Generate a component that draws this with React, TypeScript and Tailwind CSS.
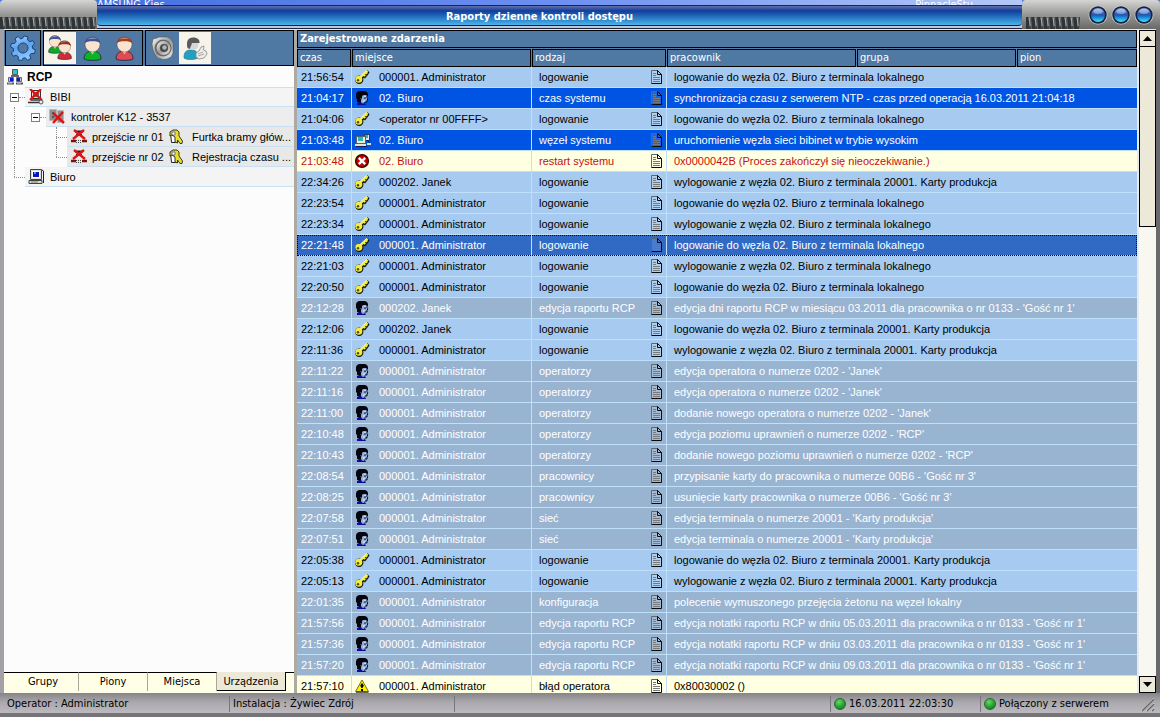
import { useState } from "react";
import type { ReactNode } from "react";

type IconKind = "key" | "face" | "net" | "error" | "warn";
type Tone = "light" | "blue" | "cream" | "muted" | "selected" | "warning";
type LogRow = [string, IconKind, string, string, string, Tone];

const ADMIN = "000001. Administrator";
const JANEK = "000202. Janek";

const rows: LogRow[] = [
  ["21:56:54", "key", ADMIN, "logowanie", "logowanie do węzła 02. Biuro z terminala lokalnego", "light"],
  ["21:04:17", "face", "02. Biuro", "czas systemu", "synchronizacja czasu z serwerem NTP - czas przed operacją 16.03.2011 21:04:18", "blue"],
  ["21:04:06", "key", "<operator nr 00FFFF>", "logowanie", "logowanie do węzła 02. Biuro z terminala lokalnego", "light"],
  ["21:03:48", "net", "02. Biuro", "węzeł systemu", "uruchomienie węzła sieci bibinet w trybie wysokim", "blue"],
  ["21:03:48", "error", "02. Biuro", "restart systemu", "0x0000042B (Proces zakończył się nieoczekiwanie.)", "cream"],
  ["22:34:26", "key", JANEK, "logowanie", "wylogowanie z węzła 02. Biuro z terminala 20001. Karty produkcja", "light"],
  ["22:23:54", "key", ADMIN, "logowanie", "logowanie do węzła 02. Biuro z terminala lokalnego", "light"],
  ["22:23:34", "key", ADMIN, "logowanie", "wylogowanie z węzła 02. Biuro z terminala lokalnego", "light"],
  ["22:21:48", "key", ADMIN, "logowanie", "logowanie do węzła 02. Biuro z terminala lokalnego", "selected"],
  ["22:21:03", "key", ADMIN, "logowanie", "wylogowanie z węzła 02. Biuro z terminala lokalnego", "light"],
  ["22:20:50", "key", ADMIN, "logowanie", "logowanie do węzła 02. Biuro z terminala lokalnego", "light"],
  ["22:12:28", "face", JANEK, "edycja raportu RCP", "edycja dni raportu RCP w miesiącu 03.2011 dla pracownika o nr 0133 - 'Gość nr 1'", "muted"],
  ["22:12:06", "key", JANEK, "logowanie", "logowanie do węzła 02. Biuro z terminala 20001. Karty produkcja", "light"],
  ["22:11:36", "key", ADMIN, "logowanie", "wylogowanie z węzła 02. Biuro z terminala 20001. Karty produkcja", "light"],
  ["22:11:22", "face", ADMIN, "operatorzy", "edycja operatora o numerze 0202 - 'Janek'", "muted"],
  ["22:11:16", "face", ADMIN, "operatorzy", "edycja operatora o numerze 0202 - 'Janek'", "muted"],
  ["22:11:00", "face", ADMIN, "operatorzy", "dodanie nowego operatora o numerze 0202 - 'Janek'", "muted"],
  ["22:10:48", "face", ADMIN, "operatorzy", "edycja poziomu uprawnień o numerze 0202 - 'RCP'", "muted"],
  ["22:10:43", "face", ADMIN, "operatorzy", "dodanie nowego poziomu uprawnień o numerze 0202 - 'RCP'", "muted"],
  ["22:08:54", "face", ADMIN, "pracownicy", "przypisanie karty do pracownika o numerze 00B6 - 'Gość nr 3'", "muted"],
  ["22:08:25", "face", ADMIN, "pracownicy", "usunięcie karty pracownika o numerze 00B6 - 'Gość nr 3'", "muted"],
  ["22:07:58", "face", ADMIN, "sieć", "edycja terminala o numerze 20001 - 'Karty produkcja'", "muted"],
  ["22:07:51", "face", ADMIN, "sieć", "edycja terminala o numerze 20001 - 'Karty produkcja'", "muted"],
  ["22:05:38", "key", ADMIN, "logowanie", "logowanie do węzła 02. Biuro z terminala 20001. Karty produkcja", "light"],
  ["22:05:13", "key", ADMIN, "logowanie", "wylogowanie z węzła 02. Biuro z terminala 20001. Karty produkcja", "light"],
  ["22:01:35", "face", ADMIN, "konfiguracja", "polecenie wymuszonego przejęcia żetonu na węzeł lokalny", "muted"],
  ["21:57:56", "face", ADMIN, "edycja raportu RCP", "edycja notatki raportu RCP w dniu 05.03.2011 dla pracownika o nr 0133 - 'Gość nr 1'", "muted"],
  ["21:57:36", "face", ADMIN, "edycja raportu RCP", "edycja notatki raportu RCP w dniu 03.03.2011 dla pracownika o nr 0133 - 'Gość nr 1'", "muted"],
  ["21:57:20", "face", ADMIN, "edycja raportu RCP", "edycja notatki raportu RCP w dniu 09.03.2011 dla pracownika o nr 0133 - 'Gość nr 1'", "muted"],
  ["21:57:10", "warn", ADMIN, "błąd operatora", "0x80030002 ()", "warning"],
];

const toneClass: Record<Tone, string> = {
  light: "bg-[#a6caf0] text-black",
  blue: "bg-[#0054e3] text-white",
  cream: "bg-[#ffffe1] text-[#c80f0f]",
  muted: "bg-[#99b4d1] text-white",
  selected: "bg-[#316ac5] text-white outline-1 -outline-offset-1 outline-dotted outline-black",
  warning: "bg-[#ffffe1] text-black",
};

function RowIcon({ kind }: { kind: IconKind }) {
  if (kind === "key")
    return (
      <svg width="16" height="16" viewBox="0 0 16 16">
        <path d="M6 10L14.500 2.200M10.500 7l1.500 1.200M13 4.600l1.200.8" stroke="#15150a" strokeWidth="3.200" fill="none" />
        <circle cx="5.200" cy="10.800" r="4.200" fill="#15150a" />
        <path d="M5.500 9.300L13.600 1.700M10 6l1.300 1M12.400 3.800l1 .7" stroke="#f2ec3a" strokeWidth="2.200" fill="none" />
        <circle cx="4.800" cy="10.300" r="3.500" fill="#f2ec3a" />
        <path d="M6 7.600L12.700 1.300" stroke="#fffcc4" strokeWidth=".9" />
        <circle cx="4" cy="11.200" r="1.200" fill="#4a4920" />
      </svg>
    );
  if (kind === "face")
    return (
      <svg width="16" height="16" viewBox="0 0 16 16">
        <path d="M5 1h6l2 1 1 2v2h-2l-2-1-2 1v2l1 1v4H5l-1-1H3V9L2 8V4l1-2z" fill="#050510" />
        <path d="M8 6l2-1h3v2l1 2-1 .5V12h-3l-1 1.500-2-1V10l1-1z" fill="#8fb0d8" />
        <path d="M13 5v2.500l1 1.500-1 1v2h-2.500" stroke="#050530" fill="none" />
        <path d="M10 7h2M7 8.500l1 1M9 11h2" stroke="#fff" fill="none" />
        <path d="M10 8h2" stroke="#050510" />
        <path d="M3 13l3-1 3 2 2-1 1 2H3z" fill="#0a0aa0" />
      </svg>
    );
  if (kind === "net")
    return (
      <svg width="18" height="16" viewBox="0 0 18 16" shapeRendering="crispEdges">
        <path d="M10 2h5v6h-5z" fill="#dce8ed" stroke="#23445c" />
        <path d="M11 3h3v3h-3z" fill="#3aa4d8" />
        <path d="M2 4h9v7H2z" fill="#ececdc" stroke="#52636b" />
        <path d="M4 5h5v4H4z" fill="#2fb5ad" />
        <path d="M1 12h11v2H1zM13 11h4v2h-4z" fill="#e3e1cf" />
        <path d="M2 14.500h11M13 8l3 3" stroke="#091b56" />
      </svg>
    );
  if (kind === "error")
    return (
      <svg width="16" height="16" viewBox="0 0 16 16">
        <circle cx="8" cy="8" r="6.400" fill="#c30000" stroke="#3c0000" strokeWidth="1.400" />
        <path d="M4.800 4.800l6.400 6.400M11.200 4.800l-6.400 6.400" stroke="#fff" strokeWidth="2.400" />
      </svg>
    );
  return (
    <svg width="16" height="16" viewBox="0 0 16 16">
      <path d="M8 2L14.500 13.500h-13z" fill="#ffed00" stroke="#777400" strokeLinejoin="round" />
      <path d="M2 14.200h12.500" stroke="#222" />
      <path d="M8 5l1.800 2.500L8.500 10h-1L6.200 7.500zM7 11h2v2H7z" fill="#000" />
    </svg>
  );
}

function DocIcon() {
  return (
    <svg width="11" height="14" viewBox="0 0 11 14" className="shrink-0">
      <path d="M.5.5h6l4 4v9H.5z" fill="#fff" fillOpacity=".1" />
      <path d="M.5 13.500V.5h6.500" stroke="#5f676e" fill="none" />
      <path d="M6.500.5v4h4v9H.5M6.500.5l4 4" stroke="#0b0b0b" fill="none" />
      <path d="M2 3.500h3M2 5.500h3M2 7.500h7M2 9.500h7M2 11.500h7" stroke="#77797a" />
    </svg>
  );
}

function Person({ body, hair, x = 0, y = 0, s = 1 }: { body: string; hair: string; x?: number; y?: number; s?: number }) {
  return (
    <g transform={`translate(${x} ${y}) scale(${s})`}>
      <path d="M3.500 23c0-5 2.500-6.500 5.500-7.500h6c3 1 5.500 2.500 5.500 7.500-3 1.800-14 1.800-17 0z" fill={body} stroke="#223" strokeWidth=".8" />
      <path d="M9 14h6l-3 4.500z" fill="#f0c7a8" />
      <circle cx="12" cy="8.500" r="7.500" fill="#fbe4cf" stroke="#6b5048" strokeWidth=".5" />
      <path d="M4 7.500C4.500 3 8 .8 12 .8S19.500 3 20 7.500c-2-2-4-2.300-8-2.300s-6 .3-8 2.300z" fill={hair} />
      <path d="M7 3.600c3-2.300 7-2.300 10-.8-4-.6-7-.4-10 .8z" fill="#fff" opacity=".6" />
    </g>
  );
}

function GearIcon() {
  return (
    <svg width="26" height="26" viewBox="0 0 26 26">
      <defs>
        <linearGradient id="gear" x2=".6" y2="1">
          <stop stopColor="#b6dcff" />
          <stop offset=".5" stopColor="#5ea3ee" />
          <stop offset="1" stopColor="#91cbff" />
        </linearGradient>
      </defs>
      <g transform="rotate(14 13 13)" fill="url(#gear)" stroke="#123e83" strokeWidth=".9">
        <path
          fillRule="evenodd"
          d="M11 1h4l.6 3.200 2.400 1L20.700 3.400l2.600 2.700-1.800 2.700.9 2.300L25.500 12v3.600l-3.200.6-1 2.300 1.800 2.700-2.700 2.600-2.700-1.800-2.300.9L14.800 25.500h-3.600l-.6-2.900-2.500-1-2.600 1.800-2.600-2.700 1.800-2.600-1-2.300L.7 15v-3.700l3-.6 1-2.400L3 5.600 5.600 3l2.700 1.800 2-1zM13 8a5 5 0 1 0 .01 0z"
        />
      </g>
    </svg>
  );
}

function SpeakerIcon() {
  return (
    <svg width="24" height="24" viewBox="0 0 24 24">
      <defs>
        <linearGradient id="metal" x2="1" y2="1">
          <stop stopColor="#fafafa" />
          <stop offset=".5" stopColor="#9b9b9b" />
          <stop offset="1" stopColor="#f5f5f5" />
        </linearGradient>
      </defs>
      <path d="M2 3l4-1 2-1h8l4 2 2 4v10l-2 4-4 2-4 .5-5-1.500-3-3-2-5-1-6z" fill="url(#metal)" stroke="#555" strokeWidth=".6" />
      <circle cx="12" cy="12" r="8.500" fill="#777" />
      <circle cx="12.500" cy="12" r="7.500" fill="url(#metal)" stroke="#444" strokeWidth=".7" />
      <circle cx="13" cy="12" r="4" fill="#4a4a4a" />
      <circle cx="13.500" cy="11.500" r="2.200" fill="#b5b5b5" />
    </svg>
  );
}

function OperatorIcon() {
  return (
    <svg width="25" height="25" viewBox="0 0 25 25">
      <path d="M1 22c0-6 2-8 7-8 6 0 7 3 7 8-4 2-11 2-14 0z" fill="#239fc2" stroke="#277086" strokeWidth=".6" />
      <circle cx="10" cy="8.500" r="5.500" fill="#d6d6d6" />
      <path d="M4.500 12C3 5 5 1.500 10 1.500s7 2.500 6.500 5.500H9l-1 3-1.500 3z" fill="#5a5a5a" />
      <path d="M13 17l3-2 2-4 3-1-.5 4L23 15l1 3-3 4-5 1-3-2z" fill="#ececec" stroke="#888" strokeWidth=".8" />
      <path d="M15 18l5-2M15 20l6-2" stroke="#aaa" />
    </svg>
  );
}

type TreeKind = "root" | "brokenPc" | "brokenBox" | "door" | "pc" | "tag";

function TreeIcon({ kind }: { kind: TreeKind }) {
  return (
    <svg width="16" height="16" viewBox="0 0 16 16" className="shrink-0">
      {kind === "root" && (
        <>
          <path d="M5.500.5h5v5h-5z" fill="#31c5c1" stroke="#555" />
          <path d="M4 7h8" stroke="#333" strokeWidth="1.500" />
          <path d="M1.500 8.500h5v4h-5zM9.500 8.500h5v4h-5z" fill="#ccc" stroke="#666" />
          <path d="M3 9h3v3H3zM10 9h3v3h-3z" fill="#0616d9" />
          <path d="M0 14.500h7M9 14.500h7" stroke="#555" strokeWidth="2" />
          <path d="M1 14h4M10 14h4" stroke="#ccc" />
        </>
      )}
      {kind === "pc" && (
        <>
          <path d="M2.500.5h11v10h-11z" fill="#e2dfd2" stroke="#454545" />
          <path d="M4 2h8v7H4z" fill="#fff" />
          <path d="M5 3h6v5H5z" fill="#0616b9" />
          <path d="M6 3h2v2H6z" fill="#4a8cff" />
          <path d="M1 11.500h13v3H1z" fill="#ddd9cb" stroke="#444" />
          <path d="M14 1l1.500 1v12" stroke="#222" fill="none" />
          <path d="M3 13h7" stroke="#777" />
        </>
      )}
      {kind === "brokenPc" && (
        <>
          <path d="M3.500 1.500h9v8h-9z" fill="#ddd" stroke="#333" />
          <path d="M5 3h6v5H5z" fill="#6c6464" />
          <path d="M0 13.500h11M3 11h9" stroke="#333" strokeWidth="1.500" />
          <circle cx="13" cy="13" r="2" fill="#eee" stroke="#555" />
          <path d="M2 0l12 11M13 0L2 11" stroke="#e01212" strokeWidth="2.200" />
        </>
      )}
      {kind === "brokenBox" && (
        <>
          <path d="M.5.5h7v11h-7zM8.500 1.500h6v12h-6z" fill="#8f8f8f" stroke="#bbb" />
          <path d="M3 3h2v2H3zM3 7h2v2H3z" fill="#555" />
          <path d="M4 4l11 10M14 3L4 14" stroke="#e01212" strokeWidth="2.400" />
        </>
      )}
      {kind === "door" && (
        <>
          <path d="M4 2.500h8M5 6h6M6 4h4" stroke="#222" strokeWidth="2" />
          <path d="M3 1l11 9M13 1L2 10" stroke="#df1515" strokeWidth="2.400" />
          <path d="M0 12h5M11 12h5" stroke="#7b1111" strokeWidth="2.400" />
          <path d="M5 11.500h6M5 13.500h6" stroke="#444" strokeDasharray="1 1" />
        </>
      )}
      {kind === "tag" && (
        <>
          <path d="M2.500 3.500h5v10h-4z" fill="#fff" stroke="#222" />
          <path d="M2 7V3L5 1h4l2 2v4l3.500 5-.5 2.500h-2L9.500 11v3L7 13V8L4 6z" fill="#e5df28" stroke="#222" strokeWidth=".9" />
          <path d="M4 3h3v3H4z" fill="#fff" stroke="#333" strokeWidth=".6" />
        </>
      )}
    </svg>
  );
}

function Toggle() {
  return (
    <button type="button" aria-label="Zwiń" className="flex size-[9px] shrink-0 items-center justify-center border border-[#808080] bg-white">
      <span className="h-px w-[5px] bg-black" />
    </button>
  );
}

function TreeRow({ children }: { children: ReactNode }) {
  return <div className="flex h-5 items-stretch">{children}</div>;
}

const dottedV = "border-l border-dotted border-[#909090]";
const dottedH = "border-t border-dotted border-[#909090]";

function Elbow({ last = false }: { last?: boolean }) {
  return (
    <div className="flex w-[11px] shrink-0 flex-col">
      <div className={`h-[10px] ${dottedV}`} />
      <div className={`flex-1 ${dottedH} ${last ? "" : dottedV}`} />
    </div>
  );
}

function Passage({ name, note, last }: { name: string; note: string; last?: boolean }) {
  return (
    <TreeRow>
      <div className="w-[10px] shrink-0" />
      <div className={`w-[42px] shrink-0 ${dottedV}`} />
      <Elbow last={last} />
      <div className="flex min-w-0 flex-1 items-center border-b border-[#c9dff2] bg-[#e8e8e8] pl-1">
        <TreeIcon kind="door" />
        <span className="ml-[5px] w-[76px] shrink-0 whitespace-nowrap">{name}</span>
        <TreeIcon kind="tag" />
        <span className="ml-2 whitespace-nowrap">{note}</span>
      </div>
    </TreeRow>
  );
}

const gridFont = "font-['Liberation_Sans',Arial,sans-serif] text-[11px] leading-[14px]";

function Tree() {
  return (
    <div className={`flex-1 overflow-hidden bg-[#fcfcfc] text-black ${gridFont}`}>
      <div className="flex h-[21px] items-center gap-1 pl-[3px] text-[12px] font-bold">
        <TreeIcon kind="root" />
        <span>RCP</span>
      </div>
      <TreeRow>
        <div className="flex w-[21px] shrink-0 items-center pl-[6px]">
          <Toggle />
          <span className={`flex-1 ${dottedH}`} />
        </div>
        <div className="flex flex-1 items-center gap-[6px] border-y border-[#c9dff2] bg-[#f4f4f4] pl-[3px]">
          <TreeIcon kind="brokenPc" />
          <span>BIBI</span>
        </div>
      </TreeRow>
      <TreeRow>
        <div className="w-[10px] shrink-0" />
        <div className={`flex w-[32px] shrink-0 items-center pl-4 ${dottedV}`}>
          <Toggle />
          <span className={`flex-1 ${dottedH}`} />
        </div>
        <div className="flex flex-1 items-center gap-[6px] border-b border-[#c9dff2] bg-[#ededed] pl-[3px]">
          <TreeIcon kind="brokenBox" />
          <span>kontroler K12 - 3537</span>
        </div>
      </TreeRow>
      <Passage name="przejście nr 01" note="Furtka bramy głów..." />
      <Passage name="przejście nr 02" note="Rejestracja czasu ..." last />
      <TreeRow>
        <div className="w-[10px] shrink-0" />
        <Elbow last />
        <div className="flex flex-1 items-center gap-[6px] border-b border-[#c9dff2] bg-[#f4f4f4] pl-[3px]">
          <TreeIcon kind="pc" />
          <span>Biuro</span>
        </div>
      </TreeRow>
    </div>
  );
}

function ToolButton({ label, on = false, children }: { label: string; on?: boolean; children: ReactNode }) {
  return (
    <button type="button" aria-label={label} aria-pressed={on} className={`flex size-8 items-center justify-center ${on ? "bg-[#f6f3ea]" : ""}`}>
      {children}
    </button>
  );
}

function Toolbar() {
  const group = "flex items-center border border-black";
  return (
    <div className="flex h-9 shrink-0 gap-[2px] bg-[#4f78a2] pl-px">
      <div className={`${group} px-px`}>
        <ToolButton label="Ustawienia"><GearIcon /></ToolButton>
      </div>
      <div className={`${group} pr-[2px]`}>
        <ToolButton label="Wszyscy" on>
          <svg width="28" height="28" viewBox="0 0 28 28">
            <Person body="#0daa24" hair="#40548e" x={0} y={1} s={0.75} />
            <Person body="#d12b38" hair="#94301c" x={9} y={6} s={0.8} />
          </svg>
        </ToolButton>
        <ToolButton label="Obecni">
          <svg width="25" height="25" viewBox="0 0 24 25"><Person body="#08b526" hair="#40548e" /></svg>
        </ToolButton>
        <ToolButton label="Nieobecni">
          <svg width="25" height="25" viewBox="0 0 24 25"><Person body="#e04a53" hair="#a23d24" /></svg>
        </ToolButton>
      </div>
      <div className={`${group} flex-1 px-px`}>
        <ToolButton label="Dźwięk"><SpeakerIcon /></ToolButton>
        <ToolButton label="Operator" on><OperatorIcon /></ToolButton>
      </div>
    </div>
  );
}

const tabs = ["Grupy", "Piony", "Miejsca", "Urządzenia"];

function Tabs() {
  const [active, setActive] = useState("Urządzenia");
  return (
    <div className="flex h-[21px] shrink-0 border-t border-black bg-[#ffffe8] text-[11px] leading-4">
      {tabs.map((t, i) => (
        <button
          key={t}
          type="button"
          onClick={() => setActive(t)}
          className={`-mt-px h-[19px] ${i === 0 ? "w-[75px] pl-1" : "w-[69px]"} ${
            t === active ? "border-r border-b border-black bg-[#ece9d8] pt-px" : "border-t border-r border-t-black border-r-[#aaa798]"
          }`}
        >
          {t}
        </button>
      ))}
    </div>
  );
}

function Teeth({ count }: { count: number }) {
  return (
    <svg width={count * 6} height="12" viewBox={`0 0 ${count * 6} 12`} className="shrink-0">
      {Array.from({ length: count }, (_, i) => (
        <g key={i} transform={`translate(${i * 6} 0)`}>
          <path d="M0 0h2.500L4 12H0z" fill="#2f3436" />
          <path d="M2.500 0H6L4.500 12H4z" fill="#6f7473" />
          <path d="M5.500 0L4.500 12" stroke="#3a4042" strokeWidth="1.200" />
          <path d="M3.200 1L4.300 9" stroke="#b4b8b6" strokeWidth=".8" />
        </g>
      ))}
    </svg>
  );
}

const metal = "bg-linear-to-b from-[#d5d5d3] via-[#989896] to-[#686866]";

function Orb({ label }: { label: string }) {
  return (
    <button type="button" aria-label={label} className="size-5">
      <svg width="20" height="20" viewBox="0 0 20 20">
        <defs>
          <linearGradient id="orb" x2="0" y2="1">
            <stop offset=".1" stopColor="#7ca2e0" />
            <stop offset=".45" stopColor="#2a56ac" />
            <stop offset=".55" stopColor="#1467c4" />
            <stop offset="1" stopColor="#3fe6ff" />
          </linearGradient>
        </defs>
        <circle cx="10" cy="10" r="9.500" fill="#c9c9c9" />
        <circle cx="10" cy="10" r="8.700" fill="#16213f" />
        <circle cx="10" cy="10" r="7" fill="url(#orb)" />
        <ellipse cx="10" cy="6.500" rx="4.500" ry="2.500" fill="#fff" opacity=".35" />
      </svg>
    </button>
  );
}

const captionFont = "font-['DejaVu_Sans_Condensed','Noto_Sans',sans-serif] text-[11px] leading-4 font-bold text-white";

function TitleBar() {
  return (
    <header className="flex h-[29px] shrink-0 bg-[#4b74e4]">
      <div className={`flex w-[97px] shrink-0 items-end rounded-t-[4px] ${metal}`}>
        <Teeth count={16} />
      </div>
      <div className="flex min-w-0 flex-1 flex-col">
        <div className="flex h-[5px] items-start justify-between overflow-hidden bg-linear-to-r from-[#4470e2] via-[#6d8ff0] to-[#b4c8f8] text-[11px] leading-[9px] text-white">
          <span>AMSUNG Kies</span>
          <span className="mr-[49px]">PinnacleStu</span>
        </div>
        <div className="flex-1 border-y border-[#20243e] bg-[#b9c9dc] pb-[2px]">
          <h1 className={`flex h-full items-center justify-center rounded-b-sm border-b border-[#101b45] bg-linear-to-b from-[#6370a8] via-[#123c9c] via-25% to-[#4cb5ea] pt-[3px] pr-10 ${captionFont}`}>
            <span>Raporty dzienne kontroli dostępu</span>
          </h1>
        </div>
      </div>
      <div className={`flex w-[138px] shrink-0 items-end rounded-t-[4px] pl-1 ${metal}`}>
        <Teeth count={9} />
        <div className="flex flex-1 justify-end gap-[3px] self-start pt-[5px] pr-[6px]">
          <Orb label="Minimalizuj" />
          <Orb label="Maksymalizuj" />
          <Orb label="Zamknij" />
        </div>
      </div>
    </header>
  );
}

const headers = ["czas", "miejsce", "rodzaj", "pracownik", "grupa", "pion"];

function LogTable() {
  const cell = "border-b border-[#bfe0fb] p-0";
  return (
    <div className="min-w-0 flex-1 overflow-hidden bg-[#5a7fa6]">
      <h2 className={`h-[18px] border border-black bg-[#4f78a2] pl-[2px] ${captionFont}`}>Zarejestrowane zdarzenia</h2>
      <table className="w-full table-fixed border-separate border-spacing-0 text-left">
        <colgroup>
          <col className="w-[55px]" />
          <col className="w-[180px]" />
          <col className="w-[135px]" />
          <col className="w-[190px]" />
          <col className="w-[160px]" />
          <col />
        </colgroup>
        <thead>
          <tr>
            {headers.map((h) => (
              <th key={h} className="h-[19px] bg-[#5a7fa6] p-0 pt-px pr-px font-normal last:pr-0">
                <div className="h-[18px] border border-black bg-[#4f78a2] pl-[2px] text-[11px] leading-4 text-white">{h}</div>
              </th>
            ))}
          </tr>
        </thead>
        <tbody className={gridFont}>
          {rows.map(([time, icon, place, kind, text, tone]) => (
            <tr key={time + icon + kind} className={`h-[21px] ${toneClass[tone]}`}>
              <td className={`${cell} border-r pl-1`}>{time}</td>
              <td className={`${cell} border-r`}>
                <div className="flex items-center pl-[2px]">
                  <span className="w-[25px] shrink-0"><RowIcon kind={icon} /></span>
                  <span className="whitespace-nowrap">{place}</span>
                </div>
              </td>
              <td className={`${cell} border-r`}>
                <div className="flex items-center justify-between pr-1 pl-[7px]">
                  <span className="whitespace-nowrap">{kind}</span>
                  <DocIcon />
                </div>
              </td>
              <td colSpan={3} className={`${cell} pl-[7px] whitespace-nowrap`}>{text}</td>
            </tr>
          ))}
        </tbody>
      </table>
    </div>
  );
}

function ScrollBar() {
  const part = "w-full shrink-0 border border-black bg-[#ece9d8]";
  return (
    <div className="ml-[2px] flex w-[17px] shrink-0 flex-col bg-[#f8f7f0]">
      <button type="button" aria-label="W górę" className={`flex h-[17px] items-center justify-center ${part}`}>
        <svg width="9" height="5" viewBox="0 0 9 5"><path d="M4.500 0L9 5H0z" /></svg>
      </button>
      <div className={`-mt-px h-[181px] ${part}`} />
      <div className="flex-1" />
      <button type="button" aria-label="W dół" className={`flex h-[17px] items-center justify-center ${part}`}>
        <svg width="9" height="5" viewBox="0 0 9 5"><path d="M4.500 5L9 0H0z" /></svg>
      </button>
    </div>
  );
}

function Led() {
  return <span className="size-3 shrink-0 rounded-full border border-[#276b2c] bg-[radial-gradient(circle_at_40%_30%,#67d667,#1d9b2b_60%,#0e6d1b)]" />;
}

function StatusBar() {
  const section = "flex items-center gap-[3px] border-l border-[#77777b] pl-[3px] h-4";
  return (
    <footer className="flex h-6 shrink-0 items-start border-b-4 border-[#777477] bg-linear-to-b from-[#858487] via-[#aaa8ac] via-45% to-[#bdbabf] pt-[3px] pl-[7px] text-[11px] leading-4 whitespace-nowrap text-black">
      <div className="w-[222px] shrink-0">Operator : Administrator</div>
      <div className={`w-[225px] shrink-0 ${section}`}>Instalacja : Żywiec Zdrój</div>
      <div className={`flex-1 ${section}`} />
      <div className={`w-[150px] shrink-0 ${section}`}><Led />16.03.2011 22:03:30</div>
      <div className={`w-[160px] shrink-0 ${section}`}><Led />Połączony z serwerem</div>
      <svg width="16" height="16" viewBox="0 0 16 16" className="mr-1 shrink-0">
        <path d="M1 15L14 2M6 15l8-8M11 15l3-3" stroke="#eee" />
        <path d="M2 15L14 3M7 15l7-7M12 15l2-2" stroke="#666" strokeWidth="1.500" />
      </svg>
    </footer>
  );
}

export default function App() {
  return (
    <div className="flex h-screen flex-col overflow-hidden bg-[#8c8c8c] font-['DejaVu_Sans_Condensed','Noto_Sans',sans-serif] text-black">
      <TitleBar />
      <main className="flex min-h-0 flex-1 border-r-4 border-l-4 border-r-[#6a6a6c] border-l-[#a3a1a5] bg-[#e6eaf0] pt-px">
        <aside className="flex w-[290px] shrink-0 flex-col">
          <Toolbar />
          <Tree />
          <Tabs />
        </aside>
        <div className="w-[3px] shrink-0 bg-[#aeaaa2]" />
        <LogTable />
        <ScrollBar />
      </main>
      <StatusBar />
    </div>
  );
}
